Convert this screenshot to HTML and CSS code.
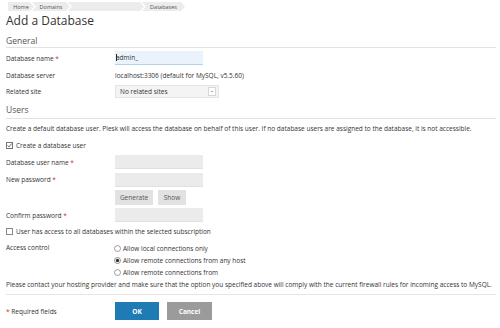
FILE: index.html
```html
<!DOCTYPE html>
<html lang="en">
<head>
    <meta charset="UTF-8">
    <title>Add a Database</title>
    <link rel="stylesheet" href="styles.css">
</head>
<body>
    <div class="page">
        <div class="breadcrumb">
            <span class="crumb crumb-home">Home</span>
            <span class="crumb crumb-domains">Domains</span>
            <span class="crumb crumb-blank"></span>
            <span class="crumb crumb-db">Databases</span>
        </div>

        <h1>Add a Database</h1>

        <h2 class="section">General</h2>
        <div class="row row-name">
            <label>Database name <em>*</em></label>
            <div class="input input-active"><span class="caret"></span>admin_</div>
        </div>
        <div class="row row-server">
            <label>Database server</label>
            <span class="value">localhost:3306 (default for MySQL, v5.5.60)</span>
        </div>
        <div class="row row-site">
            <label>Related site</label>
            <div class="select">
                <span>No related sites</span>
                <span class="select-arrow">
                    <svg width="7" height="7" viewBox="0 0 7 7"><path d="M2 2.8 L3.5 4.3 L5 2.8" fill="none" stroke="#777" stroke-width="0.8"/></svg>
                </span>
            </div>
        </div>

        <h2 class="section section-users">Users</h2>
        <p class="desc">Create a default database user. Plesk will access the database on behalf of this user. If no database users are assigned to the database, it is not accessible.</p>
        <div class="check check-create">
            <svg width="7" height="7" viewBox="0 0 7 7"><rect x=".5" y=".5" width="6" height="6" fill="#fff" stroke="#777"/><path d="M1.6 3.4 L3 4.9 L5.6 1.6" fill="none" stroke="#444" stroke-width="0.8"/></svg>
            <span>Create a database user</span>
        </div>
        <div class="row row-user">
            <label>Database user name <em>*</em></label>
            <div class="input"></div>
        </div>
        <div class="row row-pass">
            <label>New password <em>*</em></label>
            <div class="input"></div>
        </div>
        <div class="row row-buttons">
            <span></span>
            <div class="small-buttons">
                <button class="btn-grey btn-generate">Generate</button>
                <button class="btn-grey btn-show">Show</button>
            </div>
        </div>
        <div class="row row-confirm">
            <label>Confirm password <em>*</em></label>
            <div class="input"></div>
        </div>
        <div class="check check-access">
            <svg width="7" height="7" viewBox="0 0 7 7"><rect x=".5" y=".5" width="6" height="6" fill="#fff" stroke="#888"/></svg>
            <span>User has access to all databases within the selected subscription</span>
        </div>
        <div class="row row-access">
            <label>Access control</label>
            <div class="radios">
                <div class="radio">
                    <svg width="7" height="7" viewBox="0 0 7 7"><circle cx="3.5" cy="3.5" r="3" fill="#fff" stroke="#888" stroke-width="0.8"/></svg>
                    <span>Allow local connections only</span>
                </div>
                <div class="radio">
                    <svg width="7" height="7" viewBox="0 0 7 7"><circle cx="3.5" cy="3.5" r="3" fill="#fff" stroke="#777" stroke-width="0.8"/><circle cx="3.5" cy="3.5" r="1.7" fill="#333"/></svg>
                    <span>Allow remote connections from any host</span>
                </div>
                <div class="radio">
                    <svg width="7" height="7" viewBox="0 0 7 7"><circle cx="3.5" cy="3.5" r="3" fill="#fff" stroke="#888" stroke-width="0.8"/></svg>
                    <span>Allow remote connections from</span>
                </div>
            </div>
        </div>
        <p class="note">Please contact your hosting provider and make sure that the option you specified above will comply with the current firewall rules for incoming access to MySQL.</p>

        <div class="footer">
            <span class="required"><em>*</em> Required fields</span>
            <div class="actions">
                <button class="btn-ok">OK</button>
                <button class="btn-cancel">Cancel</button>
            </div>
        </div>
    </div>
</body>
</html>
```

FILE: styles.css
```css
/* Base */
body {
    margin: 0;
    padding: 0;
    background-color: #fff;
    font-family: 'Open Sans', 'Noto Sans', sans-serif;
    font-size: 6.5px;
    color: #333;
}

.page {
    padding: 0 4px 0 6px;
}

em {
    font-style: normal;
    color: #d0312d;
}

/* Breadcrumb */
.breadcrumb {
    display: flex;
    margin: 2px 0 0 2px;
    height: 9px;
}

.crumb {
    display: flex;
    justify-content: center;
    align-items: center;
    height: 9px;
    background-color: #ececec;
    color: #555;
    font-size: 5.5px;
    margin-left: -2px;
    clip-path: polygon(0 0, calc(100% - 4px) 0, 100% 50%, calc(100% - 4px) 100%, 0 100%, 4px 50%);
}

.crumb-home {
    width: 26px;
    margin-left: 0;
    clip-path: polygon(0 0, calc(100% - 4px) 0, 100% 50%, calc(100% - 4px) 100%, 0 100%);
}

.crumb-domains { width: 38px; }
.crumb-blank { width: 76px; }
.crumb-db { width: 43px; }

/* Title and sections */
h1 {
    margin: 2px 0 0 0;
    font-size: 12px;
    line-height: 16px;
    font-weight: normal;
    color: #333;
}

.section {
    margin: 6px 0 0 0;
    font-size: 8.5px;
    line-height: 12px;
    font-weight: normal;
    color: #555;
    border-bottom: 1px solid #e2e2e2;
}

.section-users {
    margin-top: 4px;
    padding-bottom: 2px;
}

/* Form rows */
.row {
    display: grid;
    grid-template-columns: 109px 1fr;
    align-items: center;
}

.row-name { height: 20px; }
.row-server { height: 14px; }
.row-site { height: 18px; }
.row-user { height: 18px; }
.row-pass { height: 17px; }
.row-buttons { height: 18px; }
.row-confirm { height: 18px; }

.input {
    width: 88px;
    height: 14px;
    box-sizing: border-box;
    background-color: #ebebeb;
    border-bottom: 1px solid #e0e0e0;
}

.input-active {
    display: flex;
    align-items: center;
    padding-left: 1px;
    background-color: #eaf3fb;
    border-bottom: 1px solid #b5d2ec;
}

.caret {
    display: inline-block;
    width: 1px;
    height: 7px;
    margin-right: -1px;
    background-color: #222;
}

.select {
    display: flex;
    justify-content: space-between;
    align-items: center;
    width: 104px;
    height: 13px;
    box-sizing: border-box;
    padding: 0 2px 0 4px;
    background-color: #f4f4f4;
    border: 1px solid #e4e4e4;
}

.select-arrow {
    display: flex;
    justify-content: center;
    align-items: center;
    width: 8px;
    height: 9px;
    box-sizing: border-box;
    border: 1px solid #d6d6d6;
    background-color: #fff;
}

.desc {
    margin: 4px 0 0 0;
    line-height: 12px;
}

.check {
    display: flex;
    align-items: center;
    gap: 3px;
}

.check-create {
    height: 16px;
    margin-top: 2px;
}

.check-access {
    height: 14px;
}

/* Buttons */
button {
    font-family: inherit;
    border: none;
    padding: 0;
    cursor: pointer;
}

.small-buttons {
    display: flex;
    gap: 5px;
}

.btn-grey {
    height: 15px;
    background-color: #e2e2e2;
    color: #555;
    font-size: 6.5px;
}

.btn-generate { width: 38px; }
.btn-show { width: 28px; }

/* Radios */
.row-access {
    align-items: start;
    margin-top: 4px;
}

.row-access label {
    line-height: 12px;
}

.radio {
    display: flex;
    align-items: center;
    gap: 2px;
    height: 12px;
    margin-left: -1px;
}

.note {
    margin: 0;
    line-height: 14px;
}

/* Footer */
.footer {
    display: grid;
    grid-template-columns: 109px 1fr;
    align-items: center;
    margin-top: 2px;
    padding-top: 7px;
    border-top: 1px solid #e6e6e6;
}

.actions {
    display: flex;
    gap: 8px;
}

.btn-ok,
.btn-cancel {
    width: 44px;
    height: 18px;
    color: #fff;
    font-size: 6.5px;
    font-weight: bold;
}

.btn-ok {
    background-color: #1e7bb3;
}

.btn-cancel {
    width: 45px;
    background-color: #9b9b9b;
}
```
